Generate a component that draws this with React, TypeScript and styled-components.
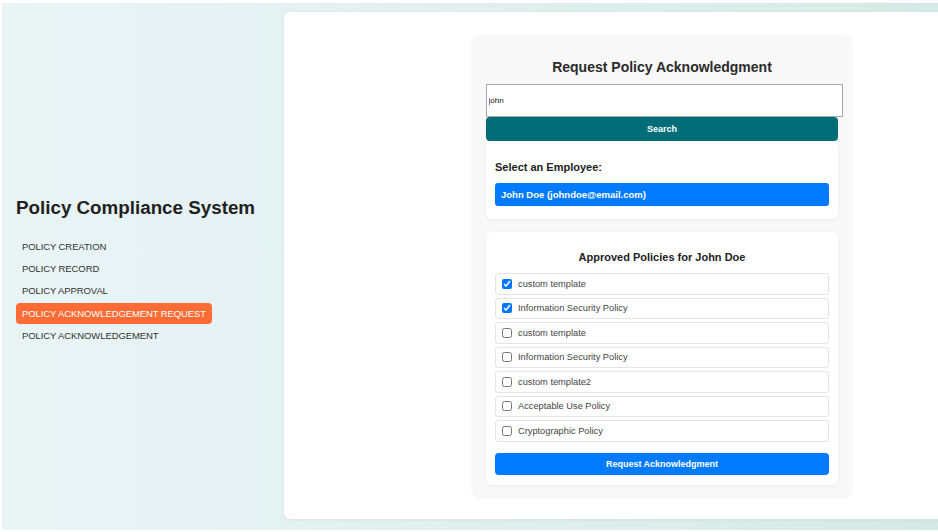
import React, { useState } from 'react';
import styled, { createGlobalStyle } from 'styled-components';

const GlobalStyle = createGlobalStyle`
  html, body {
    margin: 0;
    padding: 0;
    background: #ffffff;
    overflow: hidden;
  }
  * {
    font-family: 'Liberation Sans', Arial, sans-serif;
  }
`;

const Layout = styled.div`
  display: flex;
  margin: 3px 0 2px 2px;
  height: 527px;
  background: linear-gradient(to right, #e9f4f5 0%, #e4f1f1 35%, #d6eae5 100%);
`;

const Sidebar = styled.aside`
  width: 282px;
  flex-shrink: 0;
  display: flex;
  flex-direction: column;
  justify-content: center;
  padding: 0 0 0 14px;
  box-sizing: border-box;
`;

const Title = styled.h1`
  font-size: 18.8px;
  font-weight: 700;
  color: #222;
  margin: 0 0 17px 0;
  padding-top: 10px;
`;

const NavList = styled.nav`
  display: flex;
  flex-direction: column;
  align-items: flex-start;
  gap: 1px;
`;

const NavItem = styled.div<{ $active?: boolean }>`
  font-size: 9.5px;
  text-transform: uppercase;
  color: ${p => (p.$active ? '#ffffff' : '#333333')};
  background: ${p => (p.$active ? '#ff6b35' : 'transparent')};
  border-radius: 4px;
  padding: 0 6px;
  height: 21.3px;
  line-height: 21.3px;
  letter-spacing: -0.1px;
`;

const Main = styled.main`
  flex: 1;
  margin: 9px 0 11px 0;
  background: #ffffff;
  border-radius: 6px 0 0 6px;
  box-shadow: 0 1px 4px rgba(0, 0, 0, 0.06);
  padding: 23px 0 0 189px;
`;

const Card = styled.section`
  width: 378px;
  height: 461px;
  box-sizing: border-box;
  background: #f8f8f8;
  border-radius: 8px;
  box-shadow: 0 1px 4px rgba(0, 0, 0, 0.07);
  padding: 0 13px;
`;

const CardTitle = styled.h2`
  margin: 0;
  padding: 23px 0 8px;
  text-align: center;
  font-size: 14px;
  font-weight: 700;
  color: #2b2b2b;
  line-height: 18px;
`;

const SearchInput = styled.input`
  display: block;
  width: 100%;
  height: 31px;
  padding: 0 1.5px;
  margin: 0;
  border: 1px solid #a8a8a8;
  border-radius: 0;
  font-size: 8px;
  color: #111;
  outline: none;
  background: #fff;
`;

const SearchButton = styled.button`
  display: block;
  width: 100%;
  height: 24px;
  border: none;
  border-radius: 4px;
  background: #006d77;
  color: #fff;
  font-size: 9px;
  font-weight: 700;
  cursor: pointer;
`;

const Panel = styled.div<{ $gap?: number }>`
  background: #ffffff;
  border-radius: 6px;
  box-shadow: 0 1px 3px rgba(0, 0, 0, 0.06);
  padding: 0 9px;
  margin-bottom: ${p => p.$gap ?? 0}px;
`;

const Label = styled.div`
  font-size: 11px;
  font-weight: 700;
  color: #222;
  padding: 20px 0 10px;
`;

const EmployeeItem = styled.div`
  height: 23px;
  line-height: 23px;
  background: #007bff;
  color: #fff;
  font-size: 9.5px;
  font-weight: 700;
  border-radius: 3px;
  padding: 0 6px;
`;

const PanelTitle = styled.h3`
  margin: 0;
  padding: 19px 0 10px;
  text-align: center;
  font-size: 11px;
  font-weight: 700;
  color: #222;
`;

const PolicyList = styled.div`
  display: flex;
  flex-direction: column;
  gap: 3px;
`;

const PolicyRow = styled.label`
  display: flex;
  align-items: center;
  gap: 6px;
  height: 21.5px;
  box-sizing: border-box;
  border: 1px solid #e4e4e4;
  border-radius: 3px;
  padding: 0 6px;
  font-size: 9.25px;
  color: #444;
  cursor: pointer;
`;

const Check = styled.input`
  width: 10px;
  height: 10px;
  margin: 0;
  accent-color: #0075ff;
`;

const SubmitButton = styled.button`
  display: block;
  width: 100%;
  height: 22px;
  margin: 11px 0 0;
  border: none;
  border-radius: 4px;
  background: #007bff;
  color: #fff;
  font-size: 9px;
  font-weight: 700;
  cursor: pointer;
`;

const PanelBottom = styled.div<{ $h?: number }>`
  height: ${p => p.$h ?? 10}px;
`;

const navItems = [
  'Policy Creation',
  'Policy Record',
  'Policy Approval',
  'Policy Acknowledgement Request',
  'Policy Acknowledgement',
];

const policies = [
  { name: 'custom template', checked: true },
  { name: 'Information Security Policy', checked: true },
  { name: 'custom template', checked: false },
  { name: 'Information Security Policy', checked: false },
  { name: 'custom template2', checked: false },
  { name: 'Acceptable Use Policy', checked: false },
  { name: 'Cryptographic Policy', checked: false },
];

const App: React.FC = () => {
  const [query, setQuery] = useState('john');
  const [selected, setSelected] = useState(policies.map(p => p.checked));

  const toggle = (i: number) => {
    setSelected(prev => prev.map((v, idx) => (idx === i ? !v : v)));
  };

  return (
    <>
      <GlobalStyle />
      <Layout>
        <Sidebar>
          <Title>Policy Compliance System</Title>
          <NavList>
            {navItems.map(item => (
              <NavItem key={item} $active={item === 'Policy Acknowledgement Request'}>
                {item}
              </NavItem>
            ))}
          </NavList>
        </Sidebar>
        <Main>
          <Card>
            <CardTitle>Request Policy Acknowledgment</CardTitle>
            <SearchInput value={query} onChange={e => setQuery(e.target.value)} />
            <SearchButton>Search</SearchButton>
            <Panel $gap={13}>
              <Label>Select an Employee:</Label>
              <EmployeeItem>John Doe (johndoe@email.com)</EmployeeItem>
              <PanelBottom $h={13} />
            </Panel>
            <Panel>
              <PanelTitle>Approved Policies for John Doe</PanelTitle>
              <PolicyList>
                {policies.map((p, i) => (
                  <PolicyRow key={i}>
                    <Check type="checkbox" checked={selected[i]} onChange={() => toggle(i)} />
                    {p.name}
                  </PolicyRow>
                ))}
              </PolicyList>
              <SubmitButton>Request Acknowledgment</SubmitButton>
              <PanelBottom />
            </Panel>
          </Card>
        </Main>
      </Layout>
    </>
  );
};

export default App;
